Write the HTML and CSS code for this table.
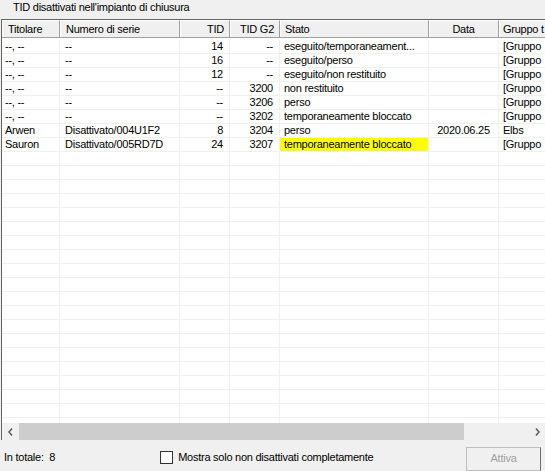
FILE: index.html
```html
<!DOCTYPE html>
<html lang="it">
<head>
<meta charset="utf-8">
<title>TID disattivati</title>
<link rel="stylesheet" href="styles.css">
</head>
<body>
<div class="title">TID disattivati nell'impianto di chiusura</div>
<div class="list">
  <div class="head">
    <div class="hc c1">Titolare</div>
    <div class="hc c2">Numero di serie</div>
    <div class="hc c3 r">TID</div>
    <div class="hc c4 r">TID G2</div>
    <div class="hc c5">Stato</div>
    <div class="hc c6 ctr">Data</div>
    <div class="hc c7">Gruppo t</div>
  </div>
  <div class="body">
    <div class="row"><div class="c c1">--, --</div><div class="c c2">--</div><div class="c c3 r">14</div><div class="c c4 r">--</div><div class="c c5">eseguito/temporaneament...</div><div class="c c6 ctr"></div><div class="c c7">[Gruppo</div></div>
    <div class="row"><div class="c c1">--, --</div><div class="c c2">--</div><div class="c c3 r">16</div><div class="c c4 r">--</div><div class="c c5">eseguito/perso</div><div class="c c6 ctr"></div><div class="c c7">[Gruppo</div></div>
    <div class="row"><div class="c c1">--, --</div><div class="c c2">--</div><div class="c c3 r">12</div><div class="c c4 r">--</div><div class="c c5">eseguito/non restituito</div><div class="c c6 ctr"></div><div class="c c7">[Gruppo</div></div>
    <div class="row"><div class="c c1">--, --</div><div class="c c2">--</div><div class="c c3 r">--</div><div class="c c4 r">3200</div><div class="c c5">non restituito</div><div class="c c6 ctr"></div><div class="c c7">[Gruppo</div></div>
    <div class="row"><div class="c c1">--, --</div><div class="c c2">--</div><div class="c c3 r">--</div><div class="c c4 r">3206</div><div class="c c5">perso</div><div class="c c6 ctr"></div><div class="c c7">[Gruppo</div></div>
    <div class="row"><div class="c c1">--, --</div><div class="c c2">--</div><div class="c c3 r">--</div><div class="c c4 r">3202</div><div class="c c5">temporaneamente bloccato</div><div class="c c6 ctr"></div><div class="c c7">[Gruppo</div></div>
    <div class="row"><div class="c c1">Arwen</div><div class="c c2">Disattivato/004U1F2</div><div class="c c3 r">8</div><div class="c c4 r">3204</div><div class="c c5">perso</div><div class="c c6 ctr">2020.06.25</div><div class="c c7">Elbs</div></div>
    <div class="row"><div class="c c1">Sauron</div><div class="c c2">Disattivato/005RD7D</div><div class="c c3 r">24</div><div class="c c4 r">3207</div><div class="c c5 hl">temporaneamente bloccato</div><div class="c c6 ctr"></div><div class="c c7">[Gruppo</div></div>
    <div class="row"><div class="c c1"></div><div class="c c2"></div><div class="c c3"></div><div class="c c4"></div><div class="c c5"></div><div class="c c6"></div><div class="c c7"></div></div>
    <div class="row"><div class="c c1"></div><div class="c c2"></div><div class="c c3"></div><div class="c c4"></div><div class="c c5"></div><div class="c c6"></div><div class="c c7"></div></div>
    <div class="row"><div class="c c1"></div><div class="c c2"></div><div class="c c3"></div><div class="c c4"></div><div class="c c5"></div><div class="c c6"></div><div class="c c7"></div></div>
    <div class="row"><div class="c c1"></div><div class="c c2"></div><div class="c c3"></div><div class="c c4"></div><div class="c c5"></div><div class="c c6"></div><div class="c c7"></div></div>
    <div class="row"><div class="c c1"></div><div class="c c2"></div><div class="c c3"></div><div class="c c4"></div><div class="c c5"></div><div class="c c6"></div><div class="c c7"></div></div>
    <div class="row"><div class="c c1"></div><div class="c c2"></div><div class="c c3"></div><div class="c c4"></div><div class="c c5"></div><div class="c c6"></div><div class="c c7"></div></div>
    <div class="row"><div class="c c1"></div><div class="c c2"></div><div class="c c3"></div><div class="c c4"></div><div class="c c5"></div><div class="c c6"></div><div class="c c7"></div></div>
    <div class="row"><div class="c c1"></div><div class="c c2"></div><div class="c c3"></div><div class="c c4"></div><div class="c c5"></div><div class="c c6"></div><div class="c c7"></div></div>
    <div class="row"><div class="c c1"></div><div class="c c2"></div><div class="c c3"></div><div class="c c4"></div><div class="c c5"></div><div class="c c6"></div><div class="c c7"></div></div>
    <div class="row"><div class="c c1"></div><div class="c c2"></div><div class="c c3"></div><div class="c c4"></div><div class="c c5"></div><div class="c c6"></div><div class="c c7"></div></div>
    <div class="row"><div class="c c1"></div><div class="c c2"></div><div class="c c3"></div><div class="c c4"></div><div class="c c5"></div><div class="c c6"></div><div class="c c7"></div></div>
    <div class="row"><div class="c c1"></div><div class="c c2"></div><div class="c c3"></div><div class="c c4"></div><div class="c c5"></div><div class="c c6"></div><div class="c c7"></div></div>
    <div class="row"><div class="c c1"></div><div class="c c2"></div><div class="c c3"></div><div class="c c4"></div><div class="c c5"></div><div class="c c6"></div><div class="c c7"></div></div>
    <div class="row"><div class="c c1"></div><div class="c c2"></div><div class="c c3"></div><div class="c c4"></div><div class="c c5"></div><div class="c c6"></div><div class="c c7"></div></div>
    <div class="row"><div class="c c1"></div><div class="c c2"></div><div class="c c3"></div><div class="c c4"></div><div class="c c5"></div><div class="c c6"></div><div class="c c7"></div></div>
    <div class="row"><div class="c c1"></div><div class="c c2"></div><div class="c c3"></div><div class="c c4"></div><div class="c c5"></div><div class="c c6"></div><div class="c c7"></div></div>
    <div class="row"><div class="c c1"></div><div class="c c2"></div><div class="c c3"></div><div class="c c4"></div><div class="c c5"></div><div class="c c6"></div><div class="c c7"></div></div>
    <div class="row"><div class="c c1"></div><div class="c c2"></div><div class="c c3"></div><div class="c c4"></div><div class="c c5"></div><div class="c c6"></div><div class="c c7"></div></div>
    <div class="row"><div class="c c1"></div><div class="c c2"></div><div class="c c3"></div><div class="c c4"></div><div class="c c5"></div><div class="c c6"></div><div class="c c7"></div></div>
    <div class="row"><div class="c c1"></div><div class="c c2"></div><div class="c c3"></div><div class="c c4"></div><div class="c c5"></div><div class="c c6"></div><div class="c c7"></div></div>
  </div>
  <div class="hscroll">
    <div class="sbtn"><svg width="5" height="8" viewBox="0 0 5 8"><path d="M4 0.5 L1 4 L4 7.5" fill="none" stroke="#606060" stroke-width="1.6"/></svg></div>
    <div class="track"><div class="thumb"></div></div>
    <div class="sbtn"><svg width="5" height="8" viewBox="0 0 5 8"><path d="M1 0.5 L4 4 L1 7.5" fill="none" stroke="#606060" stroke-width="1.6"/></svg></div>
  </div>
</div>
<div class="footer">
  <div class="total">In totale:&nbsp; 8</div>
  <label class="check"><span class="box"></span><span>Mostra solo non disattivati completamente</span></label>
  <div class="btn">Attiva</div>
</div>
</body>
</html>
```

FILE: styles.css
```css
html, body {
  margin: 0;
  padding: 0;
}
body {
  width: 545px;
  height: 471px;
  overflow: hidden;
  background: #f0f0f0;
  font-family: "Liberation Sans", Arial, sans-serif;
  font-size: 11px;
  line-height: 13px;
  letter-spacing: -0.25px;
  color: #000;
}
.title {
  height: 13px;
  padding: 1px 0 5px 13px;
  white-space: nowrap;
}
.list {
  margin-left: 1px;
  width: 544px;
  border-left: 1px solid #646464;
  border-top: 1px solid #646464;
  background: #fff;
  overflow: hidden;
}
.head {
  display: flex;
  background: #f0f0f0;
  border-bottom: 1px solid #a0a0a0;
}
.hc {
  flex: none;
  box-sizing: border-box;
  height: 17px;
  padding: 2px 5px 0 6px;
  border-top: 1px solid #fff;
  border-right: 1px solid #a0a0a0;
  box-shadow: inset 1px 0 0 #fff;
  white-space: nowrap;
  overflow: hidden;
}
.c1 { width: 58px; }
.c2 { width: 120px; }
.c3 { width: 50px; }
.c4 { width: 50px; }
.c5 { width: 149px; }
.c6 { width: 70px; }
.c7 { width: 47px; }
.r { text-align: right; }
.ctr { text-align: center; }
.body {
  height: 383px;
  padding-top: 2px;
  overflow: hidden;
  background: #fff;
}
.row {
  display: flex;
  height: 13px;
  border-bottom: 1px solid #f0f0f0;
}
.c {
  flex: none;
  box-sizing: border-box;
  height: 13px;
  padding: 0 6px 0 3px;
  border-right: 1px solid #f0f0f0;
  white-space: nowrap;
  overflow: hidden;
}
.c.c2 { padding-left: 5px; }
.c.c3, .c.c4 { padding-right: 6px; }
.c.c5 { padding-left: 4px; }
.c.c6 { padding: 0; }
.c.c7 { padding-left: 4px; border-right: 0; }
.hc.c1 { padding-left: 6px; }
.hc.c5 { padding-left: 5px; }
.hc.c6 { padding: 2px 0 0 0; }
.hc.c7 { padding-left: 4px; border-right: 0; }
.hl { background: #ffff00; }
.hscroll {
  display: flex;
  height: 17px;
  background: #f0f0f0;
}
.sbtn {
  flex: none;
  width: 17px;
  display: flex;
  align-items: center;
  justify-content: center;
}
.track {
  flex: 1;
  display: flex;
}
.thumb {
  width: 445px;
  background: #cdcdcd;
}
.footer {
  display: flex;
  align-items: flex-start;
  height: 31px;
  padding-left: 4px;
}
.total {
  margin-top: 11px;
  white-space: nowrap;
}
.check {
  display: flex;
  align-items: center;
  margin-left: 105px;
  margin-top: 11px;
  white-space: nowrap;
}
.box {
  width: 11px;
  height: 11px;
  border: 1px solid #333;
  background: #fff;
  margin-right: 5px;
}
.btn {
  box-sizing: border-box;
  margin-left: auto;
  margin-right: 4px;
  margin-top: 7px;
  width: 75px;
  height: 24px;
  border: 1px solid #bfbfbf;
  border-right-color: #6d6d6d;
  background: #f0f0f0;
  color: #a0a0a0;
  text-align: center;
  line-height: 21px;
}
```
